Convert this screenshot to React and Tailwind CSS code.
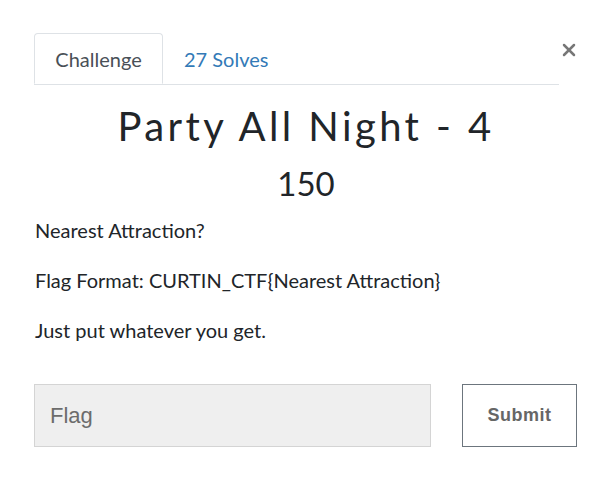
import { X } from "lucide-react";

const App = () => {
  return (
    <div className="w-[612px] h-[502px] bg-white font-['Lato',sans-serif] text-[#212529]">
      <div className="flex items-start pt-[33px] pl-[34px] pr-[33px]">
        {/* tabs */}
        <div className="flex w-[525px] border-b border-[#dee2e6]">
          <div className="-mb-px h-[51px] w-[129px] flex items-center justify-center rounded-t-[4px] border border-[#dee2e6] border-b-white bg-white text-[20px] text-[#495057]">
            Challenge
          </div>
          <div className="h-[51px] flex items-center px-[21px] text-[20px] text-[#337ab7]">
            27 Solves
          </div>
        </div>
        <button className="ml-auto mt-[7px] text-[#777]">
          <X size={20} strokeWidth={3} />
        </button>
      </div>

      <div className="flex flex-col items-center">
        <h2 className="mt-[17px] text-[40px] leading-[48px] tracking-[3.4px] font-normal">
          Party All Night - 4
        </h2>
        <h3 className="mt-[13px] text-[33px] leading-[40px] font-normal">150</h3>
      </div>

      <div className="px-[35px] mt-[12px] text-[20px] leading-[30px] flex flex-col gap-[20px]">
        <p>Nearest Attraction?</p>
        <p>Flag Format: CURTIN_CTF{"{"}Nearest Attraction{"}"}</p>
        <p>Just put whatever you get.</p>
      </div>

      <div className="flex gap-[31px] px-[34px] mt-[39px]">
        <div className="w-[397px] h-[63px] bg-[#efefef] border border-[#d4d4d4] flex items-center pl-[15px] font-['Liberation_Sans',sans-serif] text-[22px] text-[#6c6c6c]">
          Flag
        </div>
        <button className="w-[115px] h-[63px] border border-[#6c757d] font-['Liberation_Sans',sans-serif] font-bold text-[18px] text-[#666] tracking-[0.5px]">
          Submit
        </button>
      </div>
    </div>
  );
};

export default App;
